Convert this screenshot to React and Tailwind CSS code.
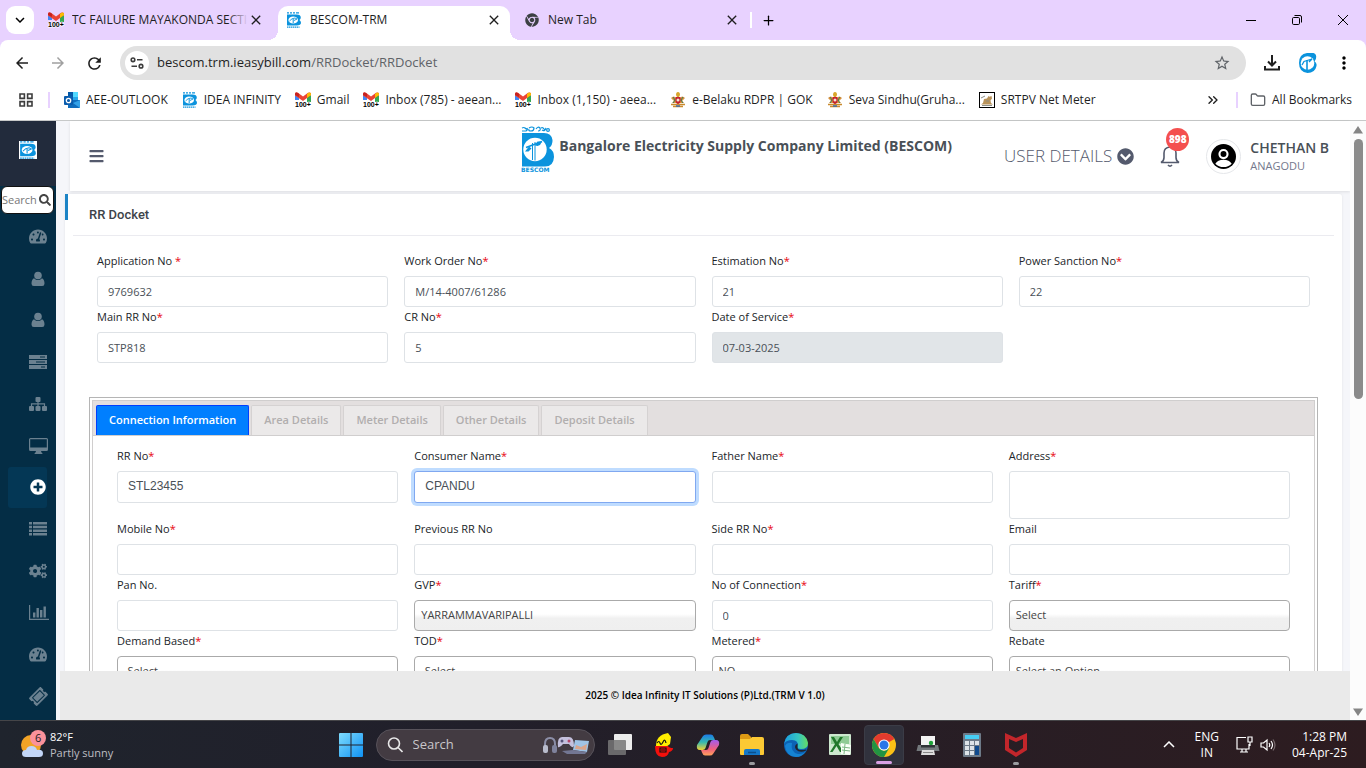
import { useState } from 'react';
import {
  FaBars,
  FaChevronCircleDown,
  FaChrome,
  FaCogs,
  FaPlusCircle,
  FaSearch,
  FaTachometerAlt,
  FaTicketAlt,
} from 'react-icons/fa';
import {
  MdArrowBack,
  MdArrowForward,
  MdClose,
  MdKeyboardArrowDown,
  MdMoreVert,
  MdRefresh,
  MdStarBorder,
} from 'react-icons/md';
import { ChevronsRight, Folder, Plus } from 'lucide-react';

const inputClass =
  'block w-full rounded-[3px] border border-[#dee2e6] bg-white px-[10px] text-[#495057] outline-none';

/* ---------- icons ---------- */

function BescomMark({ className }) {
  return (
    <svg viewBox="0 0 16 16" className={className}>
      <path d="M1 .8h2M4 .8h2M7 .8h2M10 .8h3" stroke="#0b93dd" strokeWidth="1.2" />
      <path d="M1 2.500h9.500q4.300 0 4.300 3q0 1.600-1.400 2.500q1.600 1 1.600 2.800q0 2.700-4.500 2.700H1z" fill="#0b93dd" />
      <ellipse cx="7.200" cy="8" rx="4.800" ry="3.600" fill="#fff" />
      <path d="M3.500 9 6 6.800l3-.8 2 1-3 1.500" fill="none" stroke="#0b93dd" strokeWidth=".9" />
      <path d="M7.200 7v4" stroke="#0b93dd" strokeWidth="1" />
      <path d="M1 15.200h12.500" stroke="#0b93dd" strokeWidth="1.200" strokeDasharray="1.500 .5" />
    </svg>
  );
}

function BescomLogo() {
  return (
    <svg viewBox="0 0 33 47" className="h-[47px] w-[33px] shrink-0 overflow-visible" role="img" aria-label="BESCOM">
      <g fill="none" stroke="#0b93dd" strokeWidth="1.2">
        <path d="M1 2q2-1 3 0t2 1M1 5h4q2-1 1-3M8 2q3-2 5 0q0 3-3 3t-2-2M15 3q2-3 4-1q1 3-2 3M20 2q2-1 3 1t2-1q-1 4-4 2" />
        <circle cx="27" cy="4" r="1.400" />
      </g>
      <path d="M1 7h22q7.500 0 8.500 7q.3 5-3.500 8q5 2.500 5 9q-.5 9.500-9 9.500H1z" fill="#0b93dd" />
      <circle cx="14" cy="23.500" r="11.700" fill="#fff" />
      <path d="M11.500 17v17M14 16v18.500" stroke="#0b93dd" strokeWidth="1" />
      <path d="M5 21.500 21 15.500" stroke="#0b93dd" strokeWidth="1.400" />
      <path d="M4 25.500h3.500l3-3-2.500-2zM14 19.500l2.500-4h4.500l-2 3.500-2.500 1z" fill="#0b93dd" />
      <text x="0" y="46" fontSize="6" fontWeight="900" fontFamily="DejaVu Sans, sans-serif" fill="#0b93dd">
        BESCOM
      </text>
    </svg>
  );
}

function GmailIcon() {
  return (
    <svg viewBox="0 0 16 16" className="h-4 w-4 shrink-0 overflow-visible">
      <path d="M0 3v5h4V5z" fill="#4285f4" />
      <path d="M12 5v5h4V3z" fill="#34a853" />
      <path d="M12 5 16 3q0-3-3-1.500L12 2z" fill="#fbbc04" />
      <path d="M0 2Q0-.5 3 .8l5 3.700 5-3.700Q15-.3 16 1.500v1.500L8 9 0 3.500z" fill="#ea4335" />
      <path d="M0 1.500Q1-.3 3 1l1 1v3L0 3z" fill="#c5221f" />
      <path d="M12 2l1-1q2.500-1.300 3 1v1l-4 3z" fill="#fbbc04" />
      <text
        x="0"
        y="15"
        fontSize="7"
        fontWeight="700"
        fontFamily="Liberation Sans, sans-serif"
        fill="#000"
        stroke="#fff"
        strokeWidth="1"
        paintOrder="stroke"
      >
        100+
      </text>
    </svg>
  );
}

function OutlookIcon() {
  return (
    <svg viewBox="0 0 16 16" className="h-4 w-4 shrink-0">
      <path d="M4 0h10v12H4z" fill="#28a8ea" />
      <path d="M4 0h5v5H4z" fill="#0358a7" />
      <path d="M9 0h5v5H9z" fill="#50d9ff" />
      <path d="M4 8l12 0v7a1 1 0 0 1-1 1H4z" fill="#0f6cbd" />
      <path d="M16 8v8L9 11z" fill="#33a1e8" />
      <rect y="4" width="9" height="9" rx="1" fill="#0a5cad" />
      <circle cx="4.500" cy="8.500" r="2.200" fill="none" stroke="#fff" strokeWidth="1.300" />
    </svg>
  );
}

function EmblemIcon() {
  return (
    <svg viewBox="0 0 16 16" className="h-4 w-4 shrink-0">
      <path d="M6 3q0-3 2-3t2 3l-1 2H7z" fill="#d9a62b" />
      <path d="M1 6q3-3 5 0v5H2l2-2zM15 6q-3-3-5 0v5h4l-2-2z" fill="#d98f3a" />
      <path d="M3 5l2 3-2 3M13 5l-2 3 2 3" stroke="#3c7d54" fill="none" />
      <path d="M5.500 5h5v4q0 2-2.500 3.500Q5.500 11 5.500 9z" fill="#c4202d" />
      <circle cx="8" cy="8" r="1.500" fill="#f3e3d1" />
      <path d="M1 12.500h14M3 14.500h10" stroke="#c98a2d" strokeWidth="1.300" />
      <path d="M6 14h4" stroke="#3c6aa5" strokeWidth="1.500" />
    </svg>
  );
}

function CheetahIcon() {
  return (
    <svg viewBox="0 0 16 16" className="h-4 w-4 shrink-0">
      <rect x=".5" y=".5" width="15" height="15" fill="#fff" stroke="#000" />
      <path d="M2 12.500l2-1.500 1-4 3-.5L9.500 4l1 .8 2-.8.500 2.500-1.500 2 .5 2.500 2 1.500z" fill="#b9935a" />
      <path d="M2 6l4-2M3 13.500h10M7 9h3" stroke="#8a8d86" />
    </svg>
  );
}

function UserIcon() {
  return (
    <svg viewBox="0 0 14 16" className="h-4 w-[14px]" fill="currentColor">
      <circle cx="7" cy="4.500" r="3.800" />
      <path d="M3 7.200Q7 11 11 7.200Q13.500 8.500 13.500 12.500q0 2.500-2.300 2.500H2.800q-2.300 0-2.300-2.500Q.5 8.500 3 7.200z" />
    </svg>
  );
}

function TasksIcon() {
  return (
    <svg viewBox="0 0 18 14" className="h-[14px] w-[18px]" fill="currentColor" fillRule="evenodd">
      <path d="M0 0h18v4H0zM11 1.500h5v1h-5zM0 5h18v4H0zM7 6.500h9v1H7zM0 10h18v4H0zM12 11.500h4v1h-4z" />
    </svg>
  );
}

function SitemapIcon() {
  return (
    <svg viewBox="0 0 18 16" className="h-4 w-[18px]" fill="currentColor">
      <rect x="6.500" y="1" width="5" height="5" rx="1" />
      <rect x="0" y="10" width="5" height="5" rx="1" />
      <rect x="6.500" y="10" width="5" height="5" rx="1" />
      <rect x="13" y="10" width="5" height="5" rx="1" />
      <path d="M2.500 10V7.800h13V10M9 6v4" fill="none" stroke="currentColor" strokeWidth="1.200" />
    </svg>
  );
}

function DesktopIcon() {
  return (
    <svg viewBox="0 0 19 16" className="h-4 w-[19px]" fill="currentColor" fillRule="evenodd">
      <path d="M1.500 0h16Q19 0 19 1.500v10q0 1.500-1.500 1.500H12l.5 1.500q1 0 1 1.500h-8q0-1.500 1-1.500L7 13H1.500Q0 13 0 11.500v-10Q0 0 1.500 0zM1.200 1.200v8.300h16.600V1.200z" />
    </svg>
  );
}

function ListIcon() {
  return (
    <svg viewBox="0 0 18 14" className="h-[14px] w-[18px]" fill="currentColor">
      <path d="M0 0h3v2.500H0zM4 0h14v2.500H4zM0 3.700h3v2.500H0zM4 3.700h14v2.500H4zM0 7.400h3v2.500H0zM4 7.400h14v2.500H4zM0 11.100h3v2.500H0zM4 11.100h14v2.500H4z" />
    </svg>
  );
}

function BarChartIcon() {
  return (
    <svg viewBox="0 0 20 15" className="h-[15px] w-5" fill="currentColor">
      <path d="M0 0h1.200v13.700H20V15H0zM4 7.500h2.400v5H4zM7.500 3h2.400v9.500H7.500zM11 5h2.400v7.500H11zM14.500 1.500h2.400v11h-2.400z" />
    </svg>
  );
}

function ChromeLogo() {
  return (
    <svg viewBox="0 0 24 24" className="h-6 w-6">
      <circle cx="12" cy="12" r="12" fill="#fbc116" />
      <path d="M12 12 6.800 15 1.600 6Q5 0 12 0t10.400 6z" fill="#e33b2e" />
      <path d="M1.600 6 6.800 15 12 18l5.200-3L12 24Q5 24 1.600 18t0-12z" fill="#229342" />
      <circle cx="12" cy="12" r="5.600" fill="#fff" />
      <circle cx="12" cy="12" r="4.500" fill="#2a76e8" />
    </svg>
  );
}

/* ---------- browser window ---------- */

function BrowserTab({ icon, title, active }) {
  return (
    <div
      className={
        active
          ? 'relative mt-[6px] flex h-[34px] w-[232px] items-center rounded-t-[10px] bg-white px-2 pb-[6px]'
          : 'mt-[6px] flex h-[34px] w-[232px] items-center px-2 pb-[6px]'
      }
    >
      {active && (
        <>
          <span className="absolute bottom-0 -left-[10px] h-[10px] w-[10px] bg-[radial-gradient(circle_at_0_0,#e8d2ff_10px,#fff_10px)]" />
          <span className="absolute -right-[10px] bottom-0 h-[10px] w-[10px] bg-[radial-gradient(circle_at_100%_0,#e8d2ff_10px,#fff_10px)]" />
        </>
      )}
      {icon}
      <span className="relative ml-2 flex-1 overflow-hidden text-[12px] leading-5 whitespace-nowrap text-[#1f1f1f]">
        {title}
        {!active && <span className="absolute inset-y-0 right-0 w-5 bg-linear-to-r from-transparent to-[#e8d2ff]" />}
      </span>
      <button aria-label="Close tab">
        <MdClose className="h-4 w-4 text-[#1f1f1f]" />
      </button>
    </div>
  );
}

function TitleBar() {
  return (
    <div className="flex h-10 shrink-0 bg-[#e8d2ff]">
      <button aria-label="Search tabs" className="mt-[6px] mr-[6px] ml-[6px] grid h-7 w-7 place-items-center rounded-[9px] bg-white">
        <MdKeyboardArrowDown className="h-[18px] w-[18px]" />
      </button>
      <div className="flex gap-[6px]">
        <BrowserTab icon={<GmailIcon />} title="TC FAILURE MAYAKONDA SECTI" />
        <BrowserTab icon={<BescomMark className="h-4 w-4 shrink-0" />} title="BESCOM-TRM" active />
        <BrowserTab icon={<FaChrome className="h-[14px] w-4 text-[#3c4043]" />} title="New Tab" />
      </div>
      <div className="mt-3 ml-[2px] h-4 w-[2px] bg-white" />
      <button aria-label="New tab" className="ml-1 grid h-10 w-6 place-items-center">
        <Plus className="h-[15px] w-[15px]" />
      </button>
      <div className="ml-auto flex">
        <button aria-label="Minimize" className="grid h-10 w-[46px] place-items-center">
          <span className="h-px w-[10px] bg-black" />
        </button>
        <button aria-label="Restore" className="grid h-10 w-[46px] place-items-center">
          <svg viewBox="0 0 10 10" className="h-[10px] w-[10px]" fill="none" stroke="#000">
            <rect x=".5" y="2.500" width="7" height="7" rx="1.200" />
            <path d="M2.500.5H8q1.500 0 1.500 1.500v5.500" />
          </svg>
        </button>
        <button aria-label="Close" className="grid h-10 w-[46px] place-items-center">
          <svg viewBox="0 0 10 10" className="h-[10px] w-[10px]" stroke="#000">
            <path d="M0 0l10 10M10 0 0 10" />
          </svg>
        </button>
      </div>
    </div>
  );
}

const toolButton = 'grid h-9 w-9 shrink-0 place-items-center';

function Toolbar() {
  return (
    <div className="bg-[#e8d2ff]">
      <div className="flex h-[46px] shrink-0 items-center rounded-t-lg bg-white px-1">
        <button aria-label="Back" className={toolButton}><MdArrowBack className="h-[18px] w-[18px] text-[#1f1f1f]" /></button>
        <button aria-label="Forward" className={toolButton}><MdArrowForward className="h-[18px] w-[18px] text-[#a0a0a0]" /></button>
        <button aria-label="Reload" className={toolButton}><MdRefresh className="h-[19px] w-[19px] text-[#1f1f1f]" /></button>
        <div className="ml-2 flex h-[34px] flex-1 items-center rounded-full bg-[#e1e1e1] pr-[15px] pl-[5px]">
          <button aria-label="Site information" className="grid h-6 w-6 place-items-center rounded-full bg-white">
            <svg viewBox="0 0 14 12" className="h-3 w-[14px]" fill="none" stroke="#3c3c3c" strokeWidth="1.600">
              <circle cx="3" cy="2.800" r="1.800" />
              <circle cx="11" cy="9.200" r="1.800" />
              <path d="M7 2.800h5.500M1.500 9.200H7" />
            </svg>
          </button>
          <p className="ml-2 flex-1 text-[13px] text-[#1f1f1f]">
            bescom.trm.ieasybill.com<span className="text-[#5f6368]">/RRDocket/RRDocket</span>
          </p>
          <button aria-label="Bookmark this tab"><MdStarBorder className="h-[18px] w-[18px] text-[#5f6368]" /></button>
        </div>
        <button aria-label="Downloads" className={`${toolButton} ml-2`}>
          <svg viewBox="0 0 16 16" className="h-4 w-4" fill="none" stroke="#1f1f1f" strokeWidth="2">
            <path d="M8 0v10M4 6.500l4 4 4-4M1 11v3.500h14V11" />
          </svg>
        </button>
        <button aria-label="Profile" className={toolButton}>
          <svg viewBox="0 0 20 20" className="h-5 w-5">
            <path d="M9 0h6.500q3.500 1 2.500 5.500-.5 1.500-1.500 3 2.500 1.500 2 4.500Q17 20 9.500 20 1 19 1 10T9 0z" fill="#0b93dd" />
            <circle cx="9.500" cy="10" r="6.800" fill="#fff" />
            <path d="M4 12l2-3.500 8-2.500-3 3" fill="none" stroke="#0b93dd" strokeWidth="1.300" />
            <path d="M9 7v10" stroke="#0b93dd" strokeWidth="1.600" />
          </svg>
        </button>
        <button aria-label="Menu" className={toolButton}><MdMoreVert className="h-5 w-5" /></button>
      </div>
    </div>
  );
}

const bookmarks = [
  { label: 'AEE-OUTLOOK', icon: <OutlookIcon /> },
  { label: 'IDEA INFINITY', icon: <BescomMark className="h-4 w-4 shrink-0" /> },
  { label: 'Gmail', icon: <GmailIcon /> },
  { label: 'Inbox (785) - aeean...', icon: <GmailIcon /> },
  { label: 'Inbox (1,150) - aeea...', icon: <GmailIcon /> },
  { label: 'e-Belaku RDPR | GOK', icon: <EmblemIcon /> },
  { label: 'Seva Sindhu(Gruha...', icon: <EmblemIcon /> },
  { label: 'SRTPV Net Meter', icon: <CheetahIcon /> },
];

function BookmarksBar() {
  return (
    <div className="h-[35px] shrink-0 border-b border-[#c7c9c9] bg-white">
      <div className="flex h-7 items-center pr-[14px] pl-[19px] text-[12px] text-[#1f1f1f]">
        <svg viewBox="0 0 14 14" className="h-[14px] w-[14px]" fill="none" stroke="#3c3c3c" strokeWidth="1.600">
          <path d="M1 1h4.400v4.400H1zM8.600 1H13v4.400H8.600zM1 8.600h4.400V13H1zM8.600 8.600H13V13H8.600z" />
        </svg>
        <span className="mr-[14px] ml-[15px] h-4 w-[2px] bg-[#e8d2ff]" />
        <nav className="flex gap-[14px]">
          {bookmarks.map((b) => (
            <a key={b.label} href="#" className="flex items-center gap-[6px] whitespace-nowrap">
              {b.icon}
              {b.label}
            </a>
          ))}
        </nav>
        <ChevronsRight className="mr-[15px] ml-auto h-4 w-4" />
        <span className="mr-3 h-4 w-[2px] bg-[#e8d2ff]" />
        <a href="#" className="flex items-center gap-[6px] whitespace-nowrap">
          <Folder className="h-4 w-4 text-[#5f6368]" />
          All Bookmarks
        </a>
      </div>
    </div>
  );
}

/* ---------- application ---------- */

const menu = [
  { name: 'Dashboard', icon: <FaTachometerAlt className="h-[17px] w-[18px]" /> },
  { name: 'Consumer', icon: <UserIcon /> },
  { name: 'Users', icon: <UserIcon /> },
  { name: 'Tasks', icon: <TasksIcon /> },
  { name: 'Hierarchy', icon: <SitemapIcon /> },
  { name: 'Counter', icon: <DesktopIcon /> },
  { name: 'RR Docket', icon: <FaPlusCircle className="h-4 w-4" />, active: true },
  { name: 'Lists', icon: <ListIcon /> },
  { name: 'Settings', icon: <FaCogs className="h-[18px] w-[18px]" /> },
  { name: 'Reports', icon: <BarChartIcon /> },
  { name: 'MIS', icon: <FaTachometerAlt className="h-[17px] w-[18px]" /> },
  { name: 'Tickets', icon: <FaTicketAlt className="h-[17px] w-[17px] -rotate-45" /> },
];

function Sidebar() {
  return (
    <aside className="flex w-14 shrink-0 flex-col bg-[#042d45]">
      <div className="grid h-[65px] place-items-center bg-[#222b3c] pb-[7px]">
        <BescomMark className="h-[18px] w-[18px] bg-white" />
      </div>
      <label className="mx-px mr-[2px] flex h-7 items-center rounded-md border border-[#111] bg-white text-[11px] text-[#444]">
        <input placeholder="Search" aria-label="Search menu" className="w-[37px] outline-none placeholder:text-[#777]" />
        <FaSearch className="h-3 w-3 shrink-0" />
      </label>
      <nav className="mt-[2px] mb-[3px] flex flex-1 flex-col">
        {menu.map((m) => (
          <a
            key={m.name}
            href="#"
            aria-label={m.name}
            className={
              m.active
                ? 'ml-2 grid w-[39px] flex-1 place-items-center rounded-[3px] bg-[#043755] pl-[21px] text-white'
                : 'ml-2 grid w-[39px] flex-1 place-items-center pl-[21px] text-[#6b8190]'
            }
          >
            {m.icon}
          </a>
        ))}
      </nav>
    </aside>
  );
}

function Header() {
  return (
    <header className="ml-[14px] flex h-[70px] shrink-0 bg-white pr-[21px] pl-[19px] shadow-[0_1px_3px_rgba(0,0,0,0.1)]">
      <button aria-label="Toggle menu" className="self-center">
        <FaBars className="h-4 w-[15px] text-[#545a6d]" />
      </button>
      <div className="ml-auto flex pt-[5px]">
        <BescomLogo />
        <h1 className="ml-[5px] pt-2 text-[14px] leading-6 font-bold whitespace-nowrap text-[#495057]">
          Bangalore Electricity Supply Company Limited (BESCOM)
        </h1>
      </div>
      <div className="ml-[52px] flex items-center">
        <button className="flex items-center gap-[5px] text-[17px] font-light text-[#545a6d]">
          USER DETAILS
          <FaChevronCircleDown className="h-[17px] w-[17px]" />
        </button>
        <button aria-label="Notifications" className="relative ml-[26px]">
          <svg viewBox="0 0 20 22" className="h-[22px] w-5" fill="none" stroke="#545a6d" strokeWidth="1.600">
            <path d="M1 17.500h18q-3-1.500-3-5V8q0-5.500-6-6Q4 2.500 4 8v4.500q0 3.500-3 5zM8 20q2 2.200 4 0" />
          </svg>
          <span className="absolute -top-[17px] left-[6px] grid h-[23px] w-[23px] place-items-center rounded-full bg-[#f4504f] text-[10px] font-extrabold text-white">
            898
          </span>
        </button>
        <span className="ml-[26px] grid h-[35px] w-[35px] place-items-center rounded-full border border-[#e5e7ea]">
          <svg viewBox="0 0 26 26" className="h-[25px] w-[25px]">
            <circle cx="13" cy="13" r="13" fill="#000" />
            <path d="M4.500 20.500Q7 16.500 13 16.500t8.500 4Q18 24 13 24t-8.500-3.500z" fill="#fff" />
            <circle cx="13" cy="10.500" r="4.200" fill="#000" stroke="#fff" strokeWidth="2.200" />
          </svg>
        </span>
        <div className="ml-[9px]">
          <p className="text-[14px] leading-5 font-semibold whitespace-nowrap text-[#495057]">CHETHAN B</p>
          <p className="text-[11px] leading-4 font-medium text-[#74788d]">ANAGODU</p>
        </div>
      </div>
    </header>
  );
}

function Field({ id, label, required, children }) {
  return (
    <div>
      <label htmlFor={id} className="block h-[25px] pt-[2px] text-[11px] leading-4 text-[#212529]">
        {label}
        {required && <span className="text-red-600">*</span>}
      </label>
      {children}
    </div>
  );
}

function TextField({ id, label, required, value, arial, disabled, focused, onChange }) {
  const font = arial ? 'h-8 pb-[2px] font-["Liberation_Sans",sans-serif] text-[12px]' : 'h-[31px] text-[11px]';
  const look = disabled ? 'bg-[#e1e5e8]!' : focused ? 'border-[#80a8f0]! shadow-[0_0_0_3px_#bfdcff]' : '';
  return (
    <Field id={id} label={label} required={required}>
      <input
        id={id}
        disabled={disabled}
        value={value}
        onChange={onChange}
        className={`${inputClass} ${font} ${look}`}
      />
    </Field>
  );
}

function SelectField({ id, label, required, option }) {
  return (
    <Field id={id} label={label} required={required}>
      <select
        id={id}
        className="block h-[31px] w-full appearance-none rounded-[4px] border border-[#aaa] bg-linear-to-b from-white from-45% via-[#f0f0f0] via-60% to-[#efefef] px-[6px] text-[11px] text-[#444] outline-none"
      >
        <option>{option}</option>
      </select>
    </Field>
  );
}

const tabs = ['Connection Information', 'Area Details', 'Meter Details', 'Other Details', 'Deposit Details'];

function RRDocket() {
  const [tab, setTab] = useState(tabs[0]);
  const [form, setForm] = useState({
    applicationNo: '9769632',
    workOrderNo: 'M/14-4007/61286',
    estimationNo: '21',
    powerSanctionNo: '22',
    mainRrNo: 'STP818',
    crNo: '5',
    dateOfService: '07-03-2025',
    rrNo: 'STL23455',
    consumerName: 'CPANDU',
    fatherName: '',
    mobileNo: '',
    previousRrNo: '',
    sideRrNo: '',
    email: '',
    panNo: '',
    connections: '0',
  });
  const bind = (id) => ({ id, value: form[id], onChange: (e) => setForm({ ...form, [id]: e.target.value }) });

  return (
    <section className="relative mt-[3px] mr-2 ml-[9px] rounded-t-[3px] bg-white px-2 shadow-[0_0_3px_rgba(0,0,0,0.08)]">
      <span className="absolute top-0 left-0 h-[26px] w-[3px] bg-[#1c84c6]" />
      <h2 className="h-[42px] border-b border-[#ebebf0] pl-4 font-[Roboto,sans-serif] text-[13px] leading-[41px] font-medium text-[#3d4349]">
        RR Docket
      </h2>

      <div className="mt-[15px] grid grid-cols-4 gap-x-4 px-6">
        <TextField label="Application No " required {...bind('applicationNo')} />
        <TextField label="Work Order No" required {...bind('workOrderNo')} />
        <TextField label="Estimation No" required {...bind('estimationNo')} />
        <TextField label="Power Sanction No" required {...bind('powerSanctionNo')} />
        <TextField label="Main RR No" required {...bind('mainRrNo')} />
        <TextField label="CR No" required {...bind('crNo')} />
        <TextField label="Date of Service" required disabled {...bind('dateOfService')} />
      </div>

      <div className="mx-4 mt-[34px] border border-[#b5b5b5] p-[2px]">
        <div className="border border-[#d0cece]">
          <div role="tablist" className="flex h-[35px] items-end gap-[2px] border-b border-[#d0cece] bg-[#e3dfdf] pl-[3px]">
            {tabs.map((t) => (
              <button
                key={t}
                role="tab"
                aria-selected={t === tab}
                onClick={() => setTab(t)}
                className={
                  t === tab
                    ? 'h-[30px] rounded-t-[2px] border border-b-0 border-[#003eff] bg-[#007fff] px-3 text-[11px] font-semibold text-white'
                    : 'h-[30px] rounded-t-[2px] border border-b-0 border-[#d5d2d2] bg-[#ebe9e9] px-3 text-[11px] font-semibold text-[#b1aeae]'
                }
              >
                {t}
              </button>
            ))}
          </div>

          <div className="px-6 pt-[10px]">
            <div className="grid grid-cols-4 gap-x-4">
              <TextField label="RR No" required arial {...bind('rrNo')} />
              <TextField label="Consumer Name" required arial focused {...bind('consumerName')} />
              <TextField label="Father Name" required arial {...bind('fatherName')} />
              <Field id="address" label="Address" required>
                <textarea id="address" className={`${inputClass} h-12 resize-none text-[12px]`} />
              </Field>
              <TextField label="Mobile No" required {...bind('mobileNo')} />
              <TextField label="Previous RR No" {...bind('previousRrNo')} />
              <TextField label="Side RR No" required {...bind('sideRrNo')} />
              <TextField label="Email" {...bind('email')} />
              <TextField label="Pan No." {...bind('panNo')} />
              <SelectField id="gvp" label="GVP" required option="YARRAMMAVARIPALLI" />
              <TextField label="No of Connection" required {...bind('connections')} />
              <SelectField id="tariff" label="Tariff" required option="Select" />
              <SelectField id="demand" label="Demand Based" required option="-Select-" />
              <SelectField id="tod" label="TOD" required option="-Select-" />
              <SelectField id="metered" label="Metered" required option="NO" />
              <SelectField id="rebate" label="Rebate" option="Select an Option" />
            </div>
          </div>
        </div>
      </div>
    </section>
  );
}

function Scrollbar() {
  return (
    <div className="flex w-4 shrink-0 flex-col items-center bg-[#fcfcfc] pt-[5px] pb-1">
      <svg viewBox="0 0 10 8" className="h-2 w-[10px]" fill="#858585"><path d="M5 0l5 7.500H0z" /></svg>
      <div className="mt-[5px] h-[260px] w-[9px] rounded-full bg-[#8b8b8b]" />
      <svg viewBox="0 0 10 8" className="mt-auto h-2 w-[10px]" fill="#858585"><path d="M5 8l5-7.500H0z" /></svg>
    </div>
  );
}

/* ---------- taskbar ---------- */

const pinned = [
  {
    name: 'Task view',
    icon: (
      <svg viewBox="0 0 24 24" className="h-6 w-6">
        <rect x="6" y="1" width="18" height="16" rx="1" fill="#ececec" />
        <rect x="0" y="7" width="18" height="15" rx="1" fill="#777" opacity=".85" />
      </svg>
    ),
  },
  {
    name: 'Nudi',
    icon: (
      <svg viewBox="0 0 20 24" className="h-6 w-5">
        <path d="M2 13Q2 2 14 0l3 4-1 7-4 3z" fill="#ffee00" />
        <path d="M1 13h13q1 2 5 2 0 3-4 4-1 5-7 5Q1 24 1 13z" fill="#f4100c" />
        <path d="M3 10q2-3 3 0t3-1 3 1M6 15h6v4H6zM7 17h4" stroke="#111" fill="none" strokeWidth="1.200" />
      </svg>
    ),
  },
  {
    name: 'Copilot',
    icon: (
      <svg viewBox="0 0 24 24" className="h-6 w-6">
        <defs>
          <linearGradient id="cpA" x1="0" y1="0" x2="0" y2="1">
            <stop offset="0" stopColor="#1b7be8" />
            <stop offset=".5" stopColor="#35b8b0" />
            <stop offset="1" stopColor="#f3d134" />
          </linearGradient>
          <linearGradient id="cpB" x1="0" y1="0" x2="0" y2="1">
            <stop offset="0" stopColor="#a25bf0" />
            <stop offset=".6" stopColor="#f0607c" />
            <stop offset="1" stopColor="#ffa35a" />
          </linearGradient>
        </defs>
        <path d="M7 3q1-1.500 3-1.500h5q2 0 3 3l1 2.500h-5q-2 0-2.500 2l-2 6q-.5 2-3 2H4q-4 0-3-5z" fill="url(#cpA)" />
        <path d="M17 21q-1 1.500-3 1.500H9q-2 0-3-3L5 17h5q2 0 2.500-2l2-6q.5-2 3-2H20q4 0 3 5z" fill="url(#cpB)" />
      </svg>
    ),
  },
  {
    name: 'File Explorer',
    open: true,
    icon: (
      <svg viewBox="0 0 24 24" className="h-6 w-6">
        <path d="M0 3q0-2 2-2h6l3 3v5H0z" fill="#dd9a14" />
        <path d="M0 6h10l2-2h10q2 0 2 2v15q0 1-1 1H1q-1 0-1-1z" fill="#fcc934" />
        <path d="M4 22v-4q0-2 2-2h12q2 0 2 2v4z" fill="#1477c8" />
        <path d="M8 19.500h8" stroke="#0b4f8c" strokeWidth="1.500" />
      </svg>
    ),
  },
  {
    name: 'Edge',
    icon: (
      <svg viewBox="0 0 24 24" className="h-6 w-6">
        <defs>
          <linearGradient id="edge">
            <stop offset="0" stopColor="#1b9de2" />
            <stop offset=".6" stopColor="#36c6c0" />
            <stop offset="1" stopColor="#66dd62" />
          </linearGradient>
        </defs>
        <circle cx="12" cy="12" r="12" fill="#0c62b4" />
        <path d="M0 11Q2 0 12 0t12 10q0 6-7 6-4 0-3.500-2.500Q15 7 8 7 2 7 0 11z" fill="url(#edge)" />
        <path d="M8 10q-2 9 6 11 5 .5 8-3-4 6-10 6Q2 23 1 13q2-4 7-3z" fill="#1583d3" />
        <path d="M13.500 10.500q-4 2-1.500 6 4 4 10 1 1-1 0-1-9 2-8.500-2.500z" fill="#20242d" />
      </svg>
    ),
  },
  {
    name: 'Excel',
    icon: (
      <svg viewBox="0 0 24 24" className="h-6 w-6">
        <rect x="1" y="1" width="22" height="21" rx="1" fill="#cde8cf" />
        <path d="M3 3h18v8H3z" fill="#8fcb95" />
        <path d="M3 4h3l3 5 3-5h3l-4.500 7 5 8h-3.500l-3.500-6-4 6H2l5-8z" fill="#21772b" />
        <path d="M13 10l10 2-1 10-9-1z" fill="#f8fff7" />
        <path d="M14 14l8 1M14 17l8 1M17 11l-1 10" stroke="#7cb785" />
      </svg>
    ),
  },
  { name: 'Chrome', active: true, icon: <ChromeLogo /> },
  {
    name: 'Printer',
    icon: (
      <svg viewBox="0 0 24 24" className="h-6 w-6">
        <rect x="5" y="3" width="14" height="9" fill="#f3f3f3" />
        <circle cx="15" cy="10" r="2.200" fill="#1fa33a" />
        <path d="M2 12h20l1.500 6H.5z" fill="#73787c" />
        <path d="M5 12h14v2.500H5z" fill="#303438" />
        <path d="M6 17h12l1 5H5z" fill="#ddd" />
        <path d="M7 19.500h10" stroke="#888" />
      </svg>
    ),
  },
  {
    name: 'Calculator',
    icon: (
      <svg viewBox="0 0 24 24" className="h-6 w-6">
        <rect x="3" width="18" height="24" rx="1" fill="#6d7a88" />
        <rect x="5" y="2" width="14" height="4" fill="#46cdf4" />
        <path d="M5 8h4v4H5zM10 8h4v4h-4zM15 8h4v4h-4zM5 13h4v4H5zM10 13h4v4h-4zM5 18h4v4H5zM10 18h4v4h-4z" fill="#dde3e8" />
        <path d="M15 13h4v9h-4z" fill="#104a8e" />
      </svg>
    ),
  },
  {
    name: 'McAfee',
    open: true,
    icon: (
      <svg viewBox="0 0 24 24" className="h-6 w-6">
        <path d="M1 0l11 5L23 0v17l-11 7L1 17zM5 6v9l7 4.500 7-4.500V6l-7 3z" fill="#c2262b" fillRule="evenodd" />
      </svg>
    ),
  },
];

function Taskbar() {
  return (
    <footer className="grid h-12 shrink-0 grid-cols-[1fr_auto_1fr] items-center border-t border-[#454548] bg-linear-to-r from-[#1f242d] via-[#211f2a] via-35% to-[#2d1c20] text-white">
      <div className="flex items-center gap-1 pl-5">
        <svg viewBox="0 0 26 30" className="h-[30px] w-[26px]">
          <circle cx="11" cy="15" r="10" fill="#f2a326" />
          <path d="M6 27q-4 0-4-3.500T6 20q1-4 5.500-4t5.500 4q6-1 6 3.500 0 3.500-4 3.500z" fill="#c2d6f8" />
          <circle cx="18" cy="8" r="8" fill="#fb929b" />
          <text x="15" y="12" fontSize="11" fontFamily="Open Sans, sans-serif" fill="#1d1d1d">6</text>
        </svg>
        <div className="text-[11px] leading-4">
          <p>82°F</p>
          <p className="text-[#bdbdc2]">Partly sunny</p>
        </div>
      </div>

      <div className="flex items-center">
        <button aria-label="Start" className="grid h-11 w-11 place-items-center">
          <svg viewBox="0 0 24 24" className="h-6 w-6">
            <defs>
              <linearGradient id="win" x1="0" y1="0" x2="1" y2="1">
                <stop offset="0" stopColor="#7fdcfd" />
                <stop offset="1" stopColor="#0f92f4" />
              </linearGradient>
            </defs>
            <path d="M0 1q0-1 1-1h10.500v11.500H0zM12.500 0H23q1 0 1 1v10.500H12.500zM0 12.500h11.500V24H1q-1 0-1-1zM12.500 12.500H24V23q0 1-1 1H12.500z" fill="url(#win)" />
          </svg>
        </button>
        <label className="mx-[3px] flex h-8 w-[219px] items-center rounded-full border border-[#57525a] bg-[#433b42] pr-1 pl-[10px]">
          <svg viewBox="0 0 16 16" className="h-4 w-4 shrink-0" fill="none" stroke="#e8e8e8" strokeWidth="1.600">
            <circle cx="7" cy="6.500" r="5.500" />
            <path d="M11 10.500l4.500 4.500" />
          </svg>
          <input placeholder="Search" aria-label="Search Windows" className="ml-[10px] w-0 flex-1 text-[13px] outline-none placeholder:text-[#c9c6ca]" />
          <svg viewBox="0 0 48 20" className="h-5 w-12 shrink-0">
            <path d="M3 13V9q0-6 5-6t5 6v4" fill="none" stroke="#8c8fa8" strokeWidth="2" />
            <rect x="1" y="10" width="5" height="8" rx="2" fill="#b9bccc" />
            <rect x="10" y="10" width="5" height="8" rx="2" fill="#7f829c" />
            <path d="M16 12q-1-10 4-10h7q5 0 5 9-2 3-5-2h-6q-3 4-5 3z" fill="#c4c0dc" />
            <circle cx="20" cy="6" r="1.500" fill="#57547a" />
            <circle cx="27" cy="6" r="1.500" fill="#b3456a" />
            <path d="M33 5l14 1-2 11-14-2z" fill="#9fc3e6" />
            <path d="M34 10l5 2 6-3-1 6-11-1z" fill="#d9a58c" />
            <path d="M20 16l11-1 14 2-2 2-18 0z" fill="#737793" />
          </svg>
        </label>
        {pinned.map((p) => (
          <button key={p.name} aria-label={p.name} className="grid h-11 w-11 place-items-center">
            <span
              className={
                p.active
                  ? 'relative grid h-10 w-10 place-items-center rounded-[4px] border border-[#3b3c46] bg-[#31323d]'
                  : 'relative grid h-10 w-10 place-items-center'
              }
            >
              {p.icon}
              {p.open && <span className="absolute bottom-0 left-[17px] h-[3px] w-[6px] rounded-full bg-[#9c9ca0]" />}
              {p.active && <span className="absolute bottom-0 left-[11px] h-[3px] w-4 rounded-full bg-[#d9a0e4]" />}
            </span>
          </button>
        ))}
      </div>

      <div className="flex items-center justify-end pr-[19px] text-[12px] leading-4">
        <svg viewBox="0 0 12 7" className="h-[7px] w-3" fill="none" stroke="#fff" strokeWidth="1.500">
          <path d="M1 6l5-5 5 5" />
        </svg>
        <p className="ml-5 text-center">ENG<br />IN</p>
        <svg viewBox="0 0 17 17" className="ml-[17px] h-[17px] w-[17px]" fill="none" stroke="#fff" strokeWidth="1.200">
          <path d="M10 1.500H1v11.500h12V8M4 16h8M6 13v3M10 13v3M12 1h4v5h-4zM14 6v4" />
        </svg>
        <svg viewBox="0 0 16 14" className="ml-[7px] h-[14px] w-4" fill="none" stroke="#fff" strokeWidth="1.200">
          <path d="M1 5v4h2.500l3.500 3V2L3.500 5zM9 5q1.500 2 0 4M11 3q3 4 0 8" />
          <path d="M13 1.500q4 5.500 0 11" stroke="#776a6d" />
        </svg>
        <p className="ml-4 text-right whitespace-nowrap">1:28 PM<br />04-Apr-25</p>
      </div>
    </footer>
  );
}

export default function App() {
  return (
    <div className='flex h-screen flex-col overflow-hidden bg-white font-["Open_Sans","Noto_Sans",sans-serif]'>
      <TitleBar />
      <Toolbar />
      <BookmarksBar />
      <div className="flex min-h-0 flex-1">
        <Sidebar />
        <main className="flex min-w-0 flex-1 flex-col bg-[#f5f6fa]">
          <Header />
          <div className="min-h-0 flex-1 overflow-hidden">
            <RRDocket />
          </div>
          <p className="ml-1 h-[49px] shrink-0 bg-[#eaeaea] text-center text-[10px] leading-[49px] font-semibold text-black">
            2025 © Idea Infinity IT Solutions (P)Ltd.(TRM V 1.0)
          </p>
        </main>
        <Scrollbar />
      </div>
      <Taskbar />
    </div>
  );
}
